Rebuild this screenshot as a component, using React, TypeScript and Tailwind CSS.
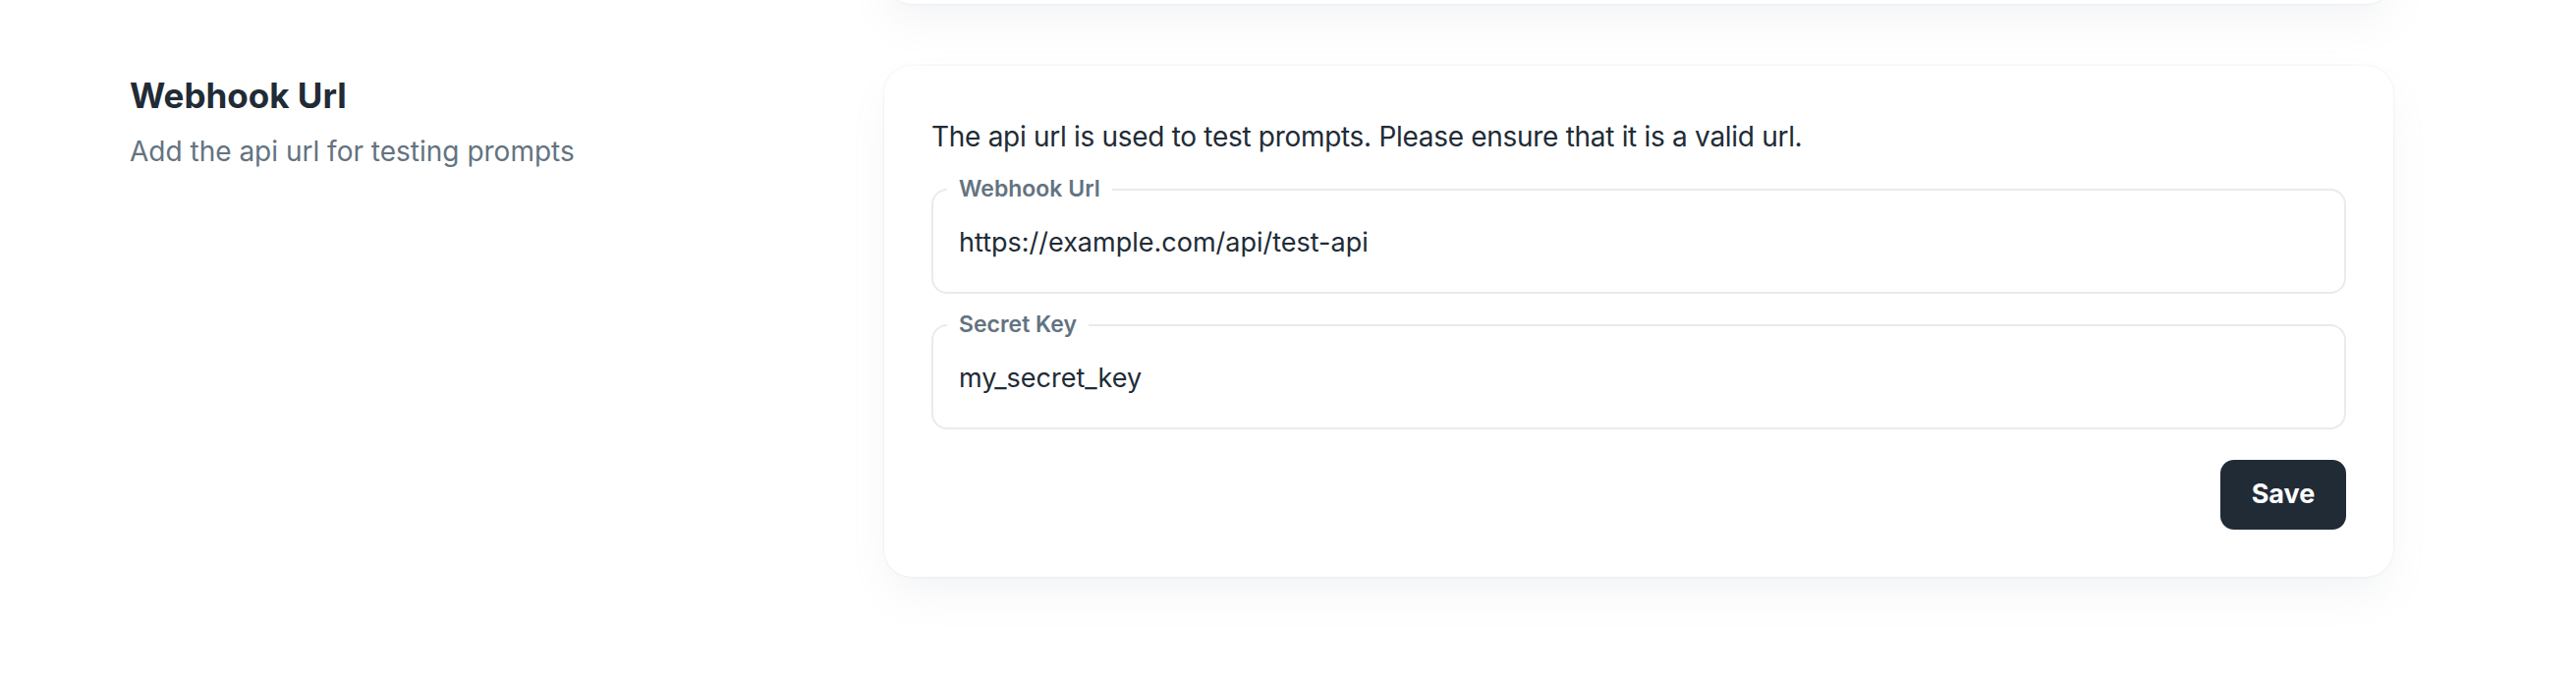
import React from 'react';

const cardShadow =
  'shadow-[0_0_3px_0_rgba(145,158,171,0.2),0_21px_42px_-7px_rgba(145,158,171,0.12)]';

interface OutlinedFieldProps {
  label: string;
  value: string;
}

const OutlinedField: React.FC<OutlinedFieldProps> = ({ label, value }) => (
  <fieldset className="rounded-[16px] border-2 border-[#e8ebee] px-[14px]">
    <legend className="px-[12px] text-[23px] leading-[23px] font-semibold text-[#637381]">
      {label}
    </legend>
    <div className="pl-[12px] pt-[23px] pb-[30px] text-[27px] leading-[40px] text-[#212b36]">
      {value}
    </div>
  </fieldset>
);

const App: React.FC = () => {
  return (
    <div className="min-h-screen overflow-hidden bg-white font-['Inter',sans-serif]">
      {/* Previous section, mostly scrolled out of view */}
      <div className="flex pl-[132px]">
        <div className="w-[768px] shrink-0" />
        <div className={`-mt-[100px] h-[104px] w-[1536px] shrink-0 rounded-[28px] bg-white ${cardShadow}`} />
      </div>

      {/* Webhook section */}
      <div className="mt-[63px] flex pl-[132px]">
        <div className="w-[768px] shrink-0 pt-[6px]">
          <h2 className="text-[35px] leading-[48px] font-bold text-[#212b36]">Webhook Url</h2>
          <p className="mt-[13px] text-[28px] leading-[40px] text-[#637381]">
            Add the api url for testing prompts
          </p>
        </div>

        <div className={`flex w-[1536px] shrink-0 flex-col rounded-[28px] bg-white p-[48px] ${cardShadow}`}>
          <p className="mt-[3px] text-[28px] leading-[42px] tracking-[-0.3px] text-[#212b36]">
            The api url is used to test prompts. Please ensure that it is a valid url.
          </p>
          <div className="mt-[21px] flex flex-col gap-[20px]">
            <OutlinedField label="Webhook Url" value="https://example.com/api/test-api" />
            <OutlinedField label="Secret Key" value="my_secret_key" />
          </div>
          <div className="mt-[31px] flex justify-end">
            <button className="h-[71px] w-[128px] rounded-[14px] bg-[#212b36] text-[27px] font-bold text-white">
              Save
            </button>
          </div>
        </div>
      </div>
    </div>
  );
};

export default App;
